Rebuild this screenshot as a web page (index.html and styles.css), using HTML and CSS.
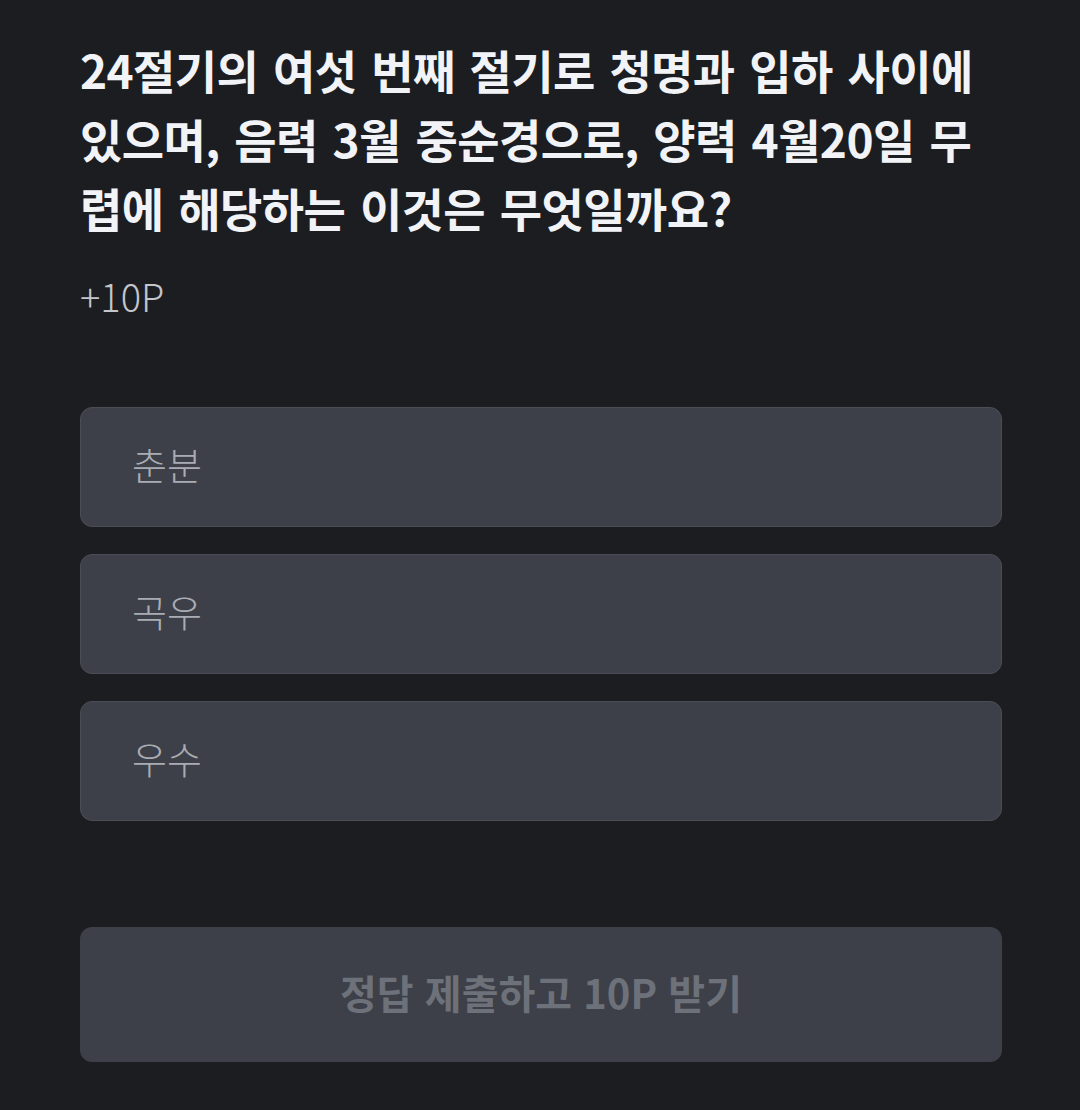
FILE: index.html
```html
<!DOCTYPE html>
<html lang="ko">
<head>
<meta charset="utf-8">
<link rel="stylesheet" href="styles.css">
</head>
<body>
<main class="quiz">
  <h1 class="question">24절기의 여섯 번째 절기로 청명과 입하 사이에 있으며, 음력 3월 중순경으로, 양력 4월20일 무렵에 해당하는 이것은 무엇일까요?</h1>
  <p class="points">+10P</p>
  <div class="options">
    <div class="option">춘분</div>
    <div class="option">곡우</div>
    <div class="option">우수</div>
  </div>
  <button class="submit" type="button">정답 제출하고 10P 받기</button>
</main>
</body>
</html>
```
FILE: styles.css
```css
html, body {
  margin: 0;
  padding: 0;
  background: #1c1d21;
}
body {
  font-family: "Noto Sans CJK KR", "Noto Sans", sans-serif;
  width: 1080px;
  height: 1110px;
  overflow: hidden;
}
.quiz {
  padding: 35px 78px 0 80px;
  display: flex;
  flex-direction: column;
}
.question {
  margin: 0;
  font-size: 46px;
  font-weight: 700;
  line-height: 69px;
  color: #f1f3f6;
  letter-spacing: -0.6px;
  word-spacing: 2.5px;
  word-break: break-all;
}
.points {
  margin: 29px 0 0;
  font-size: 38px;
  font-weight: 300;
  line-height: 50px;
  color: #c3c6cb;
}
.options {
  margin-top: 86px;
  display: flex;
  flex-direction: column;
  gap: 27px;
}
.option {
  box-sizing: border-box;
  height: 120px;
  border: 1.5px solid #4a4d55;
  border-radius: 12px;
  background: #3d4048;
  padding: 0 0 8px 51px;
  display: flex;
  align-items: center;
  font-size: 38px;
  font-weight: 300;
  color: #a9acb3;
}
.submit {
  margin-top: 106px;
  height: 135px;
  border: none;
  border-radius: 12px;
  background: #3d4048;
  font-family: inherit;
  font-size: 40px;
  font-weight: 700;
  color: #6d717a;
  padding: 0 0 6px;
}
```
